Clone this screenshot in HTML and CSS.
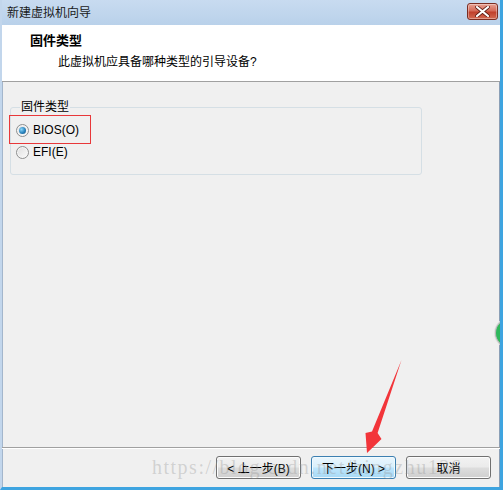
FILE: index.html
```html
<html>

<head>
  <link rel="stylesheet" href="styles.css">
</head>

<body>
  <div class="window">
    <div class="titlebar">
      <span class="title">新建虚拟机向导</span>
      <button class="close" type="button">
        <svg width="15" height="11" viewBox="0 0 15 11">
          <path d="M2 1 L13 10 M13 1 L2 10" stroke="#5a1a12" stroke-width="3.6" stroke-linecap="round" />
          <path d="M2 1 L13 10 M13 1 L2 10" stroke="#ffffff" stroke-width="2.2" stroke-linecap="round" />
        </svg>
      </button>
    </div>

    <div class="header">
      <div class="header-title">固件类型</div>
      <div class="header-sub">此虚拟机应具备哪种类型的引导设备?</div>
    </div>

    <div class="content">
      <fieldset class="group">
        <legend>固件类型</legend>
        <div class="option">
          <span class="radio checked"></span>
          <span>BIOS(O)</span>
        </div>
        <div class="option">
          <span class="radio"></span>
          <span>EFI(E)</span>
        </div>
      </fieldset>
      <!-- annotation box drawn on the screenshot -->
      <div class="mark"></div>
    </div>

    <div class="footer">
      <button class="btn" type="button">&lt; 上一步(B)</button>
      <button class="btn default" type="button">下一步(N) &gt;</button>
      <button class="btn" type="button">取消</button>
    </div>

    <div class="watermark">https://blog.csdn.net/hingzhu126</div>

    <svg class="arrow" width="503" height="490" viewBox="0 0 503 490">
      <polygon points="401.5,360 377.6,433 381.5,439 367,453 365.5,433 372,431.5" fill="#f2353a" />
    </svg>

    <div class="edge-dot"></div>
  </div>
</body>

</html>
```

FILE: styles.css
```css
body {
  margin: 0;
  font-family: "Liberation Sans", "Noto Sans CJK SC", sans-serif;
  font-size: 12px;
  color: #000;
  background: #f0f0f0;
}

.window {
  position: relative;
  width: 503px;
  height: 490px;
  box-sizing: border-box;
  display: flex;
  flex-direction: column;
  background: #f0f0f0;
  border-left: 2px solid #c2d6ec;
  border-right: 3px solid #3ea4e0;
  border-bottom: 3px solid #3ea4e0;
  box-shadow: inset -1px 0 0 #8b9fb6, inset 1px 0 0 #a3b6cc;
  overflow: hidden;
}

/* Title bar */
.titlebar {
  height: 25px;
  flex: none;
  display: flex;
  align-items: center;
  justify-content: space-between;
  padding: 0 2px 0 5px;
  background: linear-gradient(#c8dbf0, #b9d1ea);
}

.title {
  color: #1a1a1a;
  line-height: 16px;
}

.close {
  width: 31px;
  height: 17px;
  margin-top: -3px;
  padding: 0;
  display: flex;
  align-items: center;
  justify-content: center;
  border: 1px solid #7b2d22;
  border-radius: 3px;
  background: linear-gradient(#e8a193 0%, #d46a58 45%, #c0402c 55%, #d26a52 100%);
  box-shadow: inset 0 0 0 1px rgba(255, 255, 255, 0.35);
}

/* Wizard header */
.header {
  height: 56px;
  flex: none;
  background: #fff;
  border-bottom: 1px solid #a0a0a0;
  box-sizing: content-box;
}

.header-title {
  font-weight: bold;
  font-size: 13px;
  line-height: 16px;
  padding: 8px 0 0 28px;
}

.header-sub {
  line-height: 16px;
  padding: 5px 0 0 56px;
}

/* Body */
.content {
  position: relative;
  flex: 1;
  padding: 17px 0 0 8px;
}

.group {
  box-sizing: border-box;
  width: 412px;
  height: 76px;
  margin: 0;
  padding: 4px 0 0 5px;
  border: 1px solid #d5dfe5;
  border-radius: 3px;
}

.group legend {
  padding: 0 1px;
  margin-left: 4px;
  line-height: 16px;
  color: #000;
}

.option {
  height: 22px;
  display: flex;
  align-items: center;
  gap: 4px;
}

.radio {
  position: relative;
  width: 11px;
  height: 11px;
  border: 1px solid #8e8f8f;
  border-radius: 50%;
  background: linear-gradient(135deg, #dedede, #fbfbfb);
  box-shadow: inset 0 0 0 1px #f6f6f6;
}

.radio.checked::after {
  content: "";
  position: absolute;
  left: 2px;
  top: 2px;
  width: 7px;
  height: 7px;
  border-radius: 50%;
  background: radial-gradient(circle at 35% 35%, #8ad7fa, #2a83bd 55%, #154f7a);
}

.mark {
  position: absolute;
  left: 7px;
  top: 33px;
  width: 80px;
  height: 27px;
  border: 1px solid #e8383a;
}

/* Buttons */
.footer {
  flex: none;
  height: 39px;
  display: flex;
  justify-content: flex-end;
  align-items: center;
  gap: 10px;
  padding-right: 9px;
  border-top: 1px solid #a0a0a0;
  box-shadow: inset 0 1px 0 #fff;
}

.btn {
  width: 85px;
  height: 23px;
  padding: 0;
  font-family: "Liberation Sans", "Noto Sans CJK SC", sans-serif;
  font-size: 12px;
  color: #000;
  border: 1px solid #707070;
  border-radius: 3px;
  background: linear-gradient(#f2f2f2 0%, #ebebeb 48%, #dddddd 52%, #cfcfcf 100%);
  box-shadow: inset 0 0 0 1px #fcfcfc;
}

.btn.default {
  border-color: #3c7fb1;
  background: linear-gradient(#eaf6fd 0%, #d9f0fc 48%, #bee6fd 52%, #a7d9f5 100%);
  box-shadow: inset 0 0 0 1px #f0fafe;
}

/* Overlays from the screenshot */
.watermark {
  position: absolute;
  left: 150px;
  top: 456px;
  font-family: "Liberation Serif", serif;
  font-size: 20px;
  letter-spacing: 1.5px;
  color: rgba(150, 150, 150, 0.35);
  white-space: nowrap;
  pointer-events: none;
}

.arrow {
  position: absolute;
  left: -2px;
  top: 0;
  pointer-events: none;
}

.edge-dot {
  position: absolute;
  right: -21px;
  top: 319px;
  width: 24px;
  height: 26px;
  border-radius: 50%;
  background: #2eb85c;
  border: 1px solid #b8b8b8;
  box-shadow: 0 0 0 1px #e0e0e0;
}
```
